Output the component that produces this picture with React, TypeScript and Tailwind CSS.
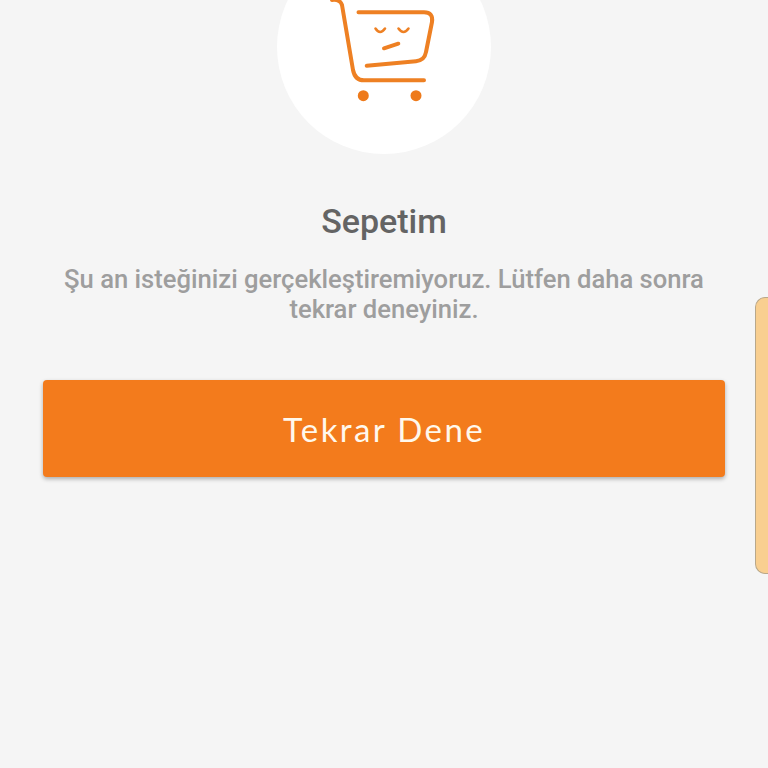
import React from 'react';

const App = () => {
  return (
    <div className="relative h-[768px] w-[768px] overflow-hidden bg-[#f5f5f5] font-['Roboto',sans-serif]">
      <div className="flex flex-col items-center px-[43px]">
        {/* SAD CART */}
        <div className="mt-[-60px] h-[214px] w-[214px] rounded-full bg-white">
          <svg viewBox="277 -60 214 214" className="block h-full w-full" fill="none" stroke="#ee8023" strokeWidth="4" strokeLinecap="round" strokeLinejoin="round">
            <path d="M332 0 Q340 -1 342 5 L353 70 Q355 80.3 364 80.3 L424 80.3" />
            <path d="M358.5 12.3 L424 12.3 Q433.5 12.3 432 22 L426 52 Q424.5 60.5 416 61.2 L366.7 65.7" />
            <path d="M375.5 28.5 Q380 35.5 385 28.5" strokeWidth="2.6" />
            <path d="M398.5 28.5 Q403.5 35.5 408.5 28.5" strokeWidth="2.6" />
            <path d="M384 48.3 L398.3 43.7" />
            <circle cx="363.3" cy="95.7" r="5.5" fill="#ee7a1b" stroke="none" />
            <circle cx="416" cy="95.7" r="5.5" fill="#ee7a1b" stroke="none" />
          </svg>
        </div>

        <h1 className="mt-[47px] text-[34px] leading-[40px] font-medium text-[#646464]">Sepetim</h1>
        <p className="mt-[23px] w-[682px] text-center text-[25.6px] leading-[30px] font-medium text-[#9e9e9e]">
          Şu an isteğinizi gerçekleştiremiyoruz. Lütfen daha sonra tekrar deneyiniz.
        </p>

        <button className="mt-[56px] flex h-[97px] w-full items-center justify-center rounded-[4px] bg-[#f37b1c] pt-[2px] font-['Lato',sans-serif] text-[33px] tracking-[2.4px] text-[#fff8ec] shadow-[0_2px_4px_rgba(0,0,0,0.3)]">
          Tekrar Dene
        </button>
      </div>

      {/* SIDE HANDLE */}
      <div className="absolute top-[297px] right-0 h-[277px] w-[13px] rounded-l-[10px] border border-r-0 border-[#b9a88a] bg-[#f9cf90]" />
    </div>
  );
};

export default App;
